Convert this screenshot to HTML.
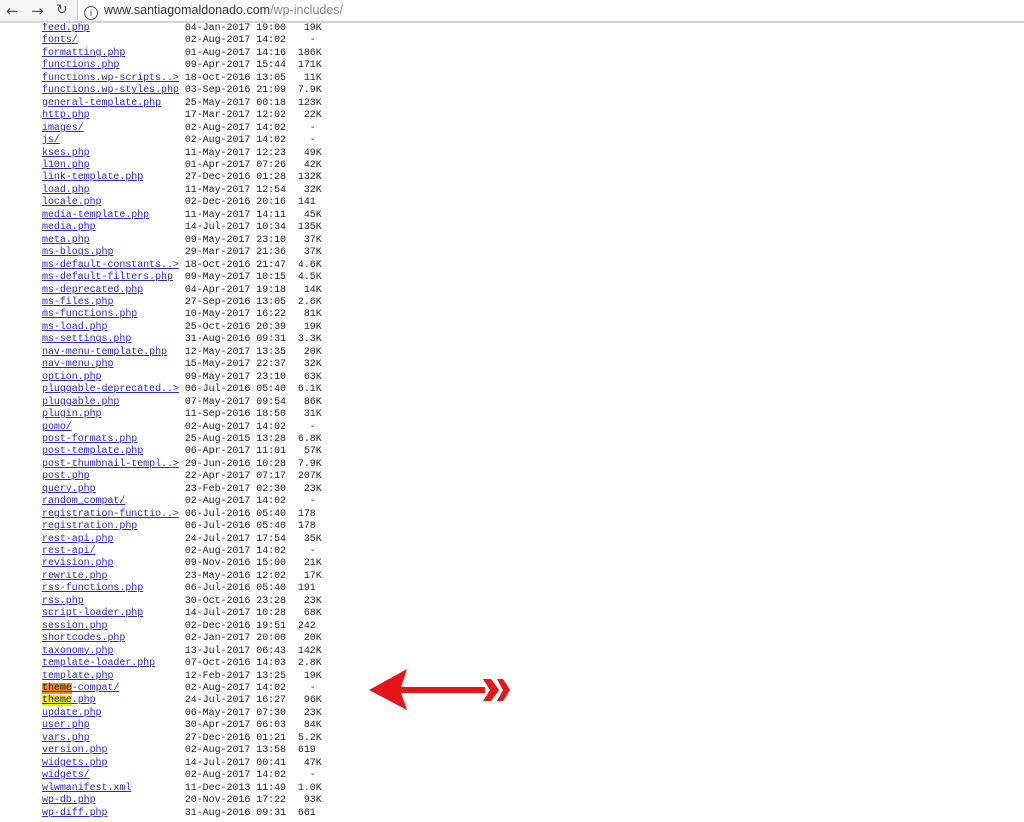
<!DOCTYPE html>
<html><head><meta charset="utf-8"><style>
body{margin:0;background:#fff;width:1024px;height:822px;overflow:hidden;position:relative;font-family:"Liberation Mono",monospace}
#bar{position:absolute;left:0;top:0;width:1024px;height:21px;background:#f5f5f5;border-bottom:2px solid #d4d4d4;z-index:2}
#url{position:absolute;left:77px;top:0px;width:960px;height:20px;background:#fff;border-left:1px solid #cfcfcf;font-family:"Liberation Sans",sans-serif;font-size:12.5px;color:#333;line-height:21px}
#rows{position:absolute;left:42px;top:23px;font-size:10px;color:#222;white-space:pre;line-height:12.45px;letter-spacing:-0.05px}
a{color:#2a2ac8;text-decoration:underline}
.o{background:#f08a24;color:#222}.y{background:#f5f01a;color:#222}
</style></head><body>
<div id="bar">
<span style="position:absolute;left:6px;top:2px;font-size:15px;color:#555;font-family:'DejaVu Sans'">&#8592;</span>
<span style="position:absolute;left:31px;top:2px;font-size:15px;color:#555;font-family:'DejaVu Sans'">&#8594;</span>
<span style="position:absolute;left:56px;top:2px;font-size:14px;color:#555;font-family:'DejaVu Sans'">&#8635;</span>
<div id="url"><span style="display:inline-block;width:12px;height:12px;border:1px solid #555;border-radius:50%;font-size:9px;line-height:12px;text-align:center;margin:0 6px 0 6px;vertical-align:-2px">i</span>www.santiagomaldonado.com<span style="color:#888">/wp-includes/</span></div>
</div>
<div id="rows"><a>feed.php</a>                04-Jan-2017 19:00   19K
<a>fonts/</a>                  02-Aug-2017 14:02    -
<a>formatting.php</a>          01-Aug-2017 14:16  186K
<a>functions.php</a>           09-Apr-2017 15:44  171K
<a>functions.wp-scripts..&gt;</a> 18-Oct-2016 13:05   11K
<a>functions.wp-styles.php</a> 03-Sep-2016 21:09  7.9K
<a>general-template.php</a>    25-May-2017 00:18  123K
<a>http.php</a>                17-Mar-2017 12:02   22K
<a>images/</a>                 02-Aug-2017 14:02    -
<a>js/</a>                     02-Aug-2017 14:02    -
<a>kses.php</a>                11-May-2017 12:23   49K
<a>l10n.php</a>                01-Apr-2017 07:26   42K
<a>link-template.php</a>       27-Dec-2016 01:28  132K
<a>load.php</a>                11-May-2017 12:54   32K
<a>locale.php</a>              02-Dec-2016 20:16  141
<a>media-template.php</a>      11-May-2017 14:11   45K
<a>media.php</a>               14-Jul-2017 10:34  135K
<a>meta.php</a>                09-May-2017 23:10   37K
<a>ms-blogs.php</a>            29-Mar-2017 21:36   37K
<a>ms-default-constants..&gt;</a> 18-Oct-2016 21:47  4.6K
<a>ms-default-filters.php</a>  09-May-2017 10:15  4.5K
<a>ms-deprecated.php</a>       04-Apr-2017 19:18   14K
<a>ms-files.php</a>            27-Sep-2016 13:05  2.6K
<a>ms-functions.php</a>        10-May-2017 16:22   81K
<a>ms-load.php</a>             25-Oct-2016 20:39   19K
<a>ms-settings.php</a>         31-Aug-2016 09:31  3.3K
<a>nav-menu-template.php</a>   12-May-2017 13:35   20K
<a>nav-menu.php</a>            15-May-2017 22:37   32K
<a>option.php</a>              09-May-2017 23:10   63K
<a>pluggable-deprecated..&gt;</a> 06-Jul-2016 05:40  6.1K
<a>pluggable.php</a>           07-May-2017 09:54   86K
<a>plugin.php</a>              11-Sep-2016 18:50   31K
<a>pomo/</a>                   02-Aug-2017 14:02    -
<a>post-formats.php</a>        25-Aug-2015 13:28  6.8K
<a>post-template.php</a>       06-Apr-2017 11:01   57K
<a>post-thumbnail-templ..&gt;</a> 29-Jun-2016 10:28  7.9K
<a>post.php</a>                22-Apr-2017 07:17  207K
<a>query.php</a>               23-Feb-2017 02:30   23K
<a>random_compat/</a>          02-Aug-2017 14:02    -
<a>registration-functio..&gt;</a> 06-Jul-2016 05:40  178
<a>registration.php</a>        06-Jul-2016 05:40  178
<a>rest-api.php</a>            24-Jul-2017 17:54   35K
<a>rest-api/</a>               02-Aug-2017 14:02    -
<a>revision.php</a>            09-Nov-2016 15:00   21K
<a>rewrite.php</a>             23-May-2016 12:02   17K
<a>rss-functions.php</a>       06-Jul-2016 05:40  191
<a>rss.php</a>                 30-Oct-2016 23:28   23K
<a>script-loader.php</a>       14-Jul-2017 10:28   68K
<a>session.php</a>             02-Dec-2016 19:51  242
<a>shortcodes.php</a>          02-Jan-2017 20:00   20K
<a>taxonomy.php</a>            13-Jul-2017 06:43  142K
<a>template-loader.php</a>     07-Oct-2016 14:03  2.8K
<a>template.php</a>            12-Feb-2017 13:25   19K
<a><span class="o">theme</span>-compat/</a>           02-Aug-2017 14:02    -
<a><span class="y">theme</span>.php</a>               24-Jul-2017 16:27   96K
<a>update.php</a>              06-May-2017 07:30   23K
<a>user.php</a>                30-Apr-2017 06:03   84K
<a>vars.php</a>                27-Dec-2016 01:21  5.2K
<a>version.php</a>             02-Aug-2017 13:58  619
<a>widgets.php</a>             14-Jul-2017 00:41   47K
<a>widgets/</a>                02-Aug-2017 14:02    -
<a>wlwmanifest.xml</a>         11-Dec-2013 11:49  1.0K
<a>wp-db.php</a>               20-Nov-2016 17:22   93K
<a>wp-diff.php</a>             31-Aug-2016 09:31  661</div>
<svg style="position:absolute;left:365px;top:666px" width="150" height="44" viewBox="0 0 150 44">
<polygon points="4,24 42,3 36,21 36,27 42,44" fill="#e8141a"/>
<rect x="36" y="21" width="84" height="6" fill="#e8141a"/>
<polygon points="118,13 126,13 134,24 126,35 118,35 125,24" fill="#e8141a"/>
<polygon points="132,13 138,13 145,24 138,35 132,35 138,24" fill="#e8141a"/>
</svg>
</body></html>
